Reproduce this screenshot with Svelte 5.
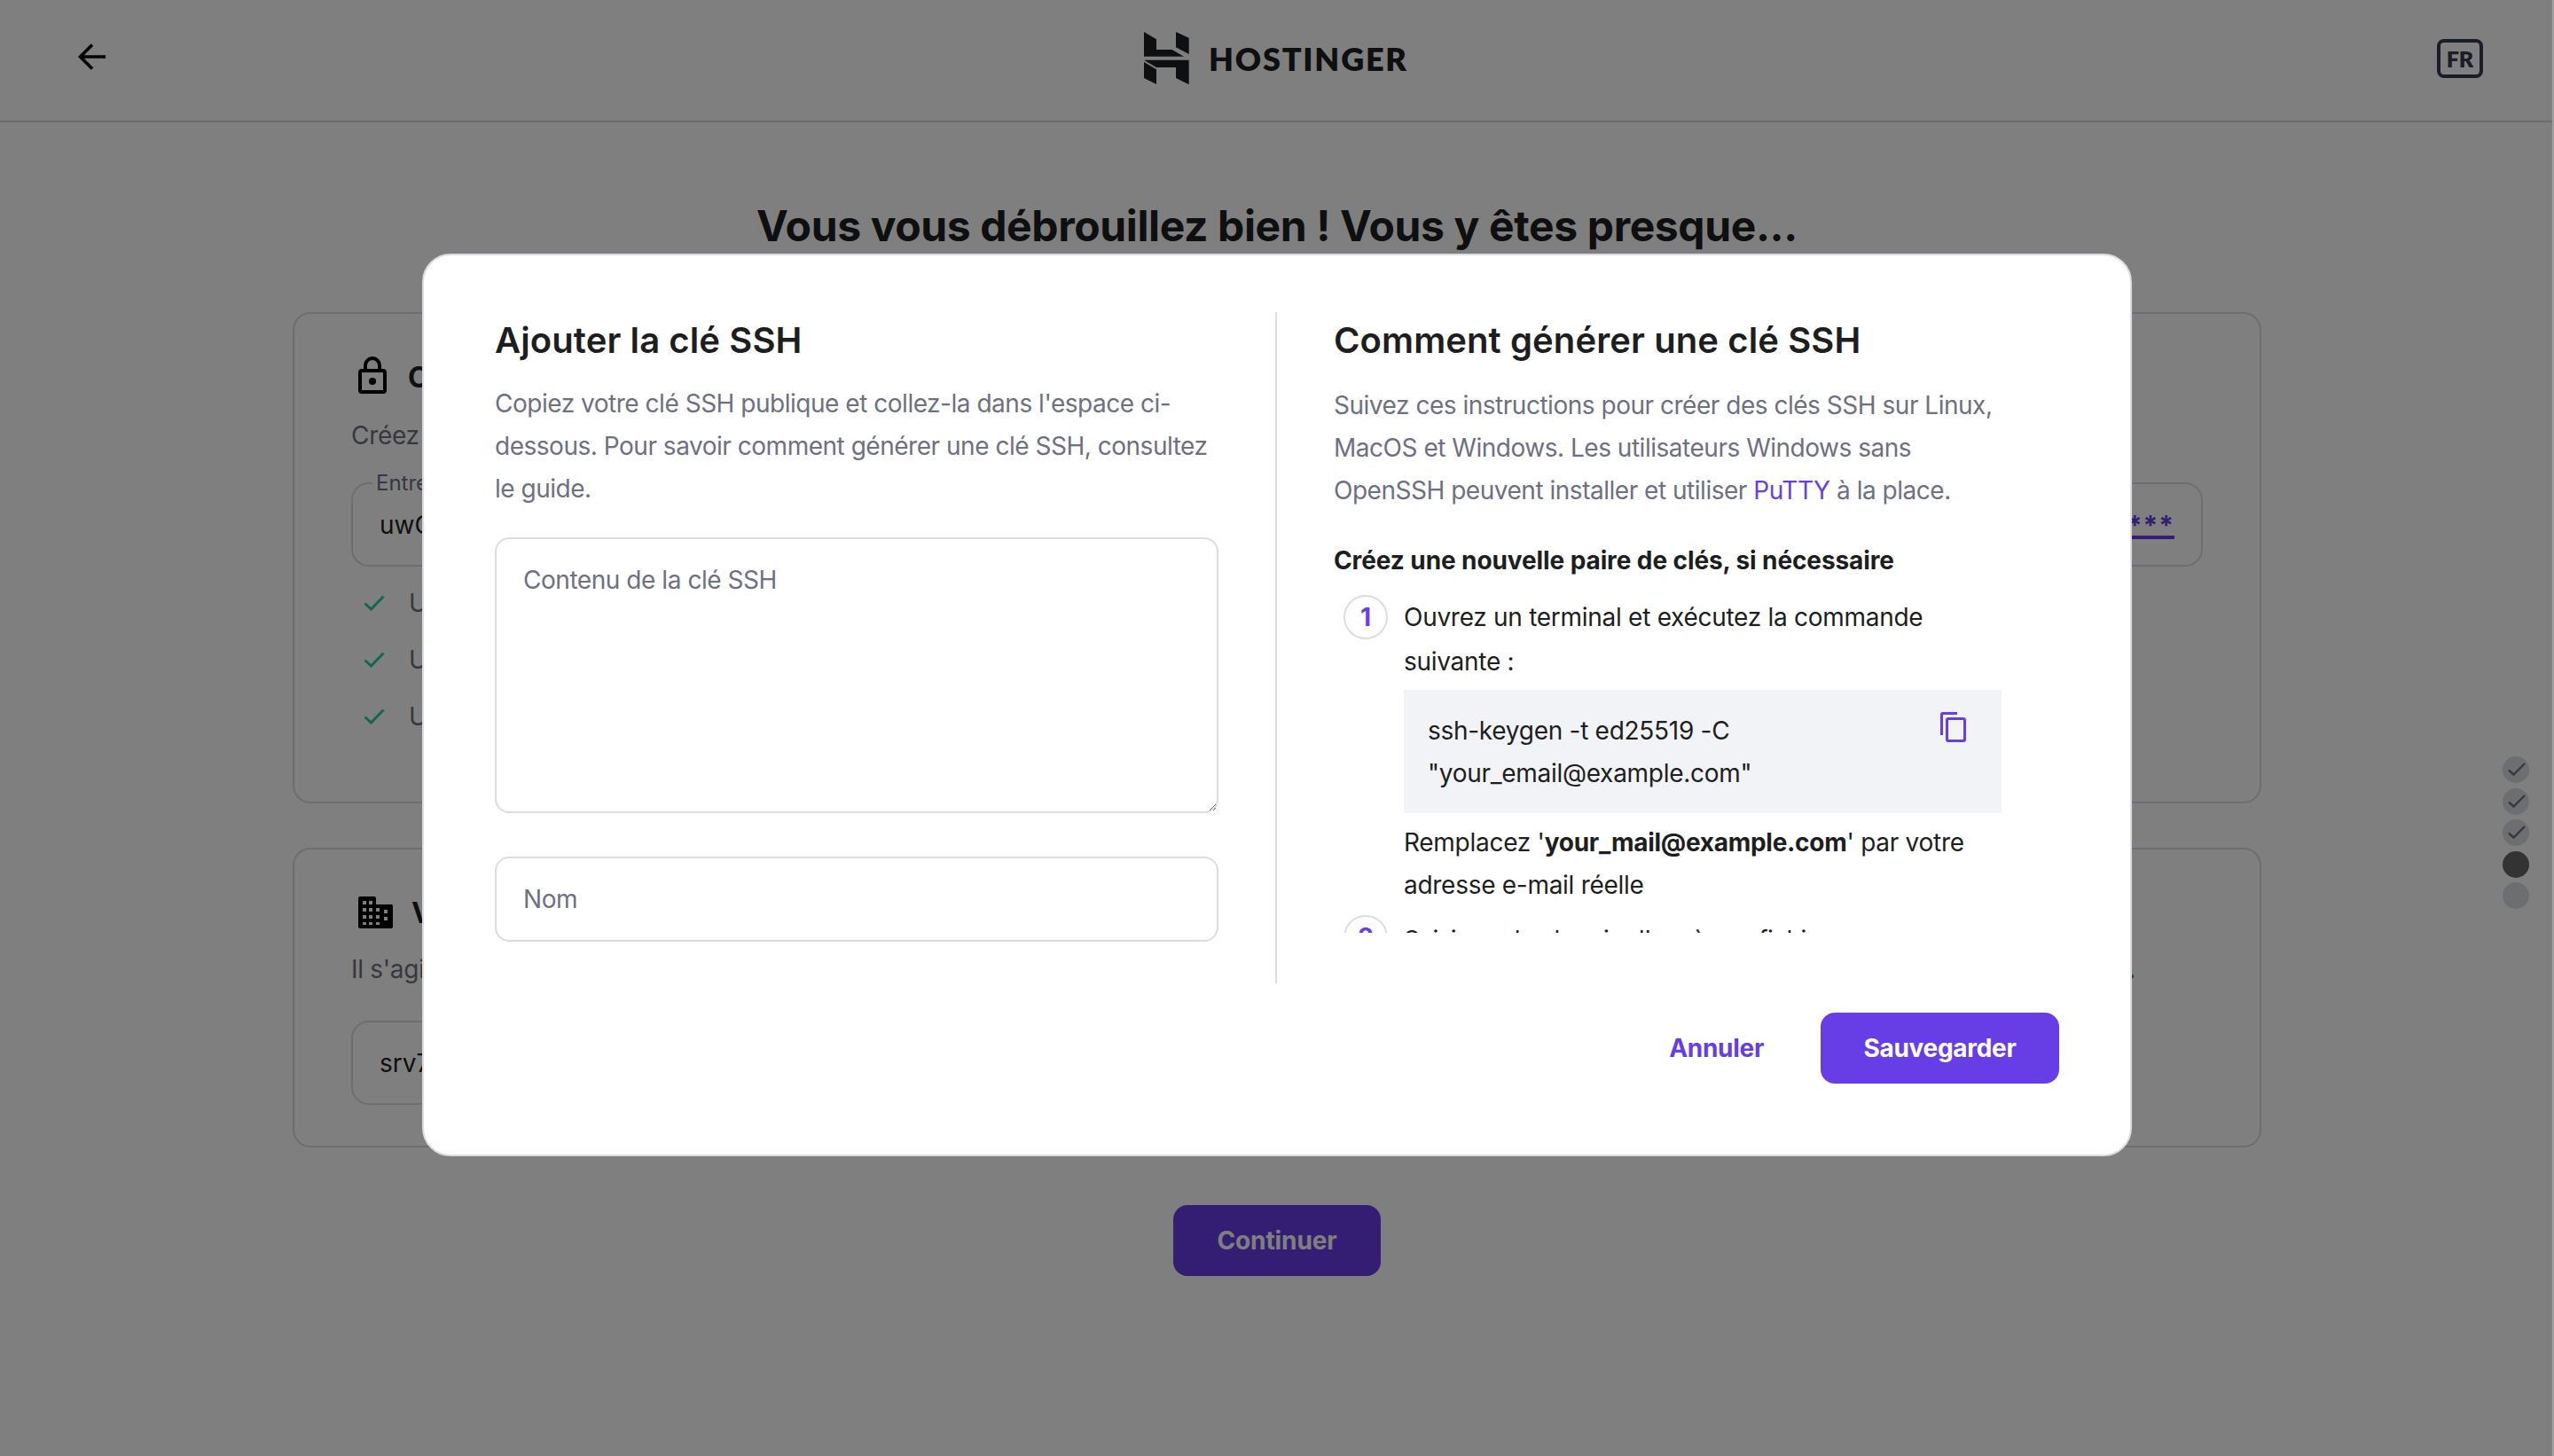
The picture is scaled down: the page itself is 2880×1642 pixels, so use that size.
<script>
  const checks = ['Une lettre majuscule et une lettre minuscule', 'Un chiffre et un caractère spécial', 'Un minimum de 12 caractères'];
  const dots = ['done', 'done', 'done', 'active', 'todo'];
</script>

<div class="page">
  <header class="top">
    <svg class="back" viewBox="0 0 32 32" fill="none" stroke="#000" stroke-width="3.6"><path d="M31 16H3M16 2.5 2.5 16 16 29.5"/></svg>
    <div class="brand">
      <svg class="logo" viewBox="0 0 240 240" fill="#1d1e20">
        <path d="M30 30 72 55V90H125L165 113H30Z"/>
        <path d="M138 30 182 50V105L138 82Z"/>
        <path d="M30 125H182V208L138 186V150H72Z"/>
        <path d="M30 132 72 157V207L30 186Z"/>
      </svg>
      <span class="word">HOSTINGER</span>
    </div>
    <span class="lang">FR</span>
  </header>

  <main class="main">
    <h1>Vous vous débrouillez bien ! Vous y êtes presque...</h1>

    <section class="card one">
      <div class="ctitle">
        <svg class="lock" viewBox="0 0 32 42" fill="none" stroke="#000" stroke-width="4"><path d="M8 18V10a8 8 0 0 1 16 0v8"/><rect x="2" y="16" width="28" height="24" rx="2"/><circle cx="16" cy="28" r="4" fill="#000" stroke="none"/></svg>
        <h2>Créer un mot de passe root</h2>
      </div>
      <p class="cdesc">Créez un mot de passe sécurisé pour votre serveur</p>
      <div class="field pw">
        <span class="legend">Entrez le mot de passe</span>
        <span class="val">uwG7kPq</span>
        <span class="stars">***</span>
      </div>
      <ul class="rules">
        {#each checks as c}
          <li>
            <svg viewBox="0 0 24 18" fill="none" stroke="#20d0a0" stroke-width="3"><path d="M1.5 9.5 8.5 16 22.5 1.5"/></svg>
            <span>{c}</span>
          </li>
        {/each}
      </ul>
    </section>

    <section class="card two">
      <div class="ctitle">
        <svg class="bld" viewBox="0 0 39 36">
          <path fill="#000" fill-rule="evenodd" d="M2 0H18a2 2 0 0 1 2 2V9H37a2 2 0 0 1 2 2V34a2 2 0 0 1-2 2H2a2 2 0 0 1-2-2V2A2 2 0 0 1 2 0ZM5 5V9H9V5ZM12 5V9H16V5ZM5 13V17H9V13ZM12 13V17H16V13ZM5 21V25H9V21ZM12 21V25H16V21ZM5 29V32H9V29ZM12 29V32H16V29ZM20 13V17H24V13ZM29 15V19H33V15ZM20 21V25H24V21ZM29 23V27H33V23ZM20 29V32H24V29Z"/>
        </svg>
        <h2>Votre nom d'hôte</h2>
      </div>
      <p class="cdesc split"><span>Il s'agit du nom de votre serveur</span><span>.</span></p>
      <div class="field host"><span class="val">srv7</span></div>
    </section>

    <button class="cont">Continuer</button>
  </main>

  <div class="dots">
    {#each dots as d}
      <span class="dot {d}">
        {#if d === 'done'}
          <svg viewBox="0 0 30 30" fill="none" stroke="#6d7081" stroke-width="2.4"><path d="M7 15.5 12.5 20.5 25 8"/></svg>
        {/if}
      </span>
    {/each}
  </div>

  <div class="overlay"></div>

  <div class="wrap">
    <div class="modal">
      <div class="cols">
        <div class="left">
          <h3>Ajouter la clé SSH</h3>
          <p class="lead l1">Copiez votre clé SSH publique et collez-la dans l'espace ci-<br />dessous. Pour savoir comment générer une clé SSH, consultez<br />le guide.</p>
          <textarea placeholder="Contenu de la clé SSH"></textarea>
          <input placeholder="Nom" />
        </div>
        <div class="rule"></div>
        <div class="right">
          <h3>Comment générer une clé SSH</h3>
          <p class="lead l2">Suivez ces instructions pour créer des clés SSH sur Linux,<br />MacOS et Windows. Les utilisateurs Windows sans<br />OpenSSH peuvent installer et utiliser <span class="link">PuTTY</span> à la place.</p>
          <h4>Créez une nouvelle paire de clés, si nécessaire</h4>

          <div class="step">
            <span class="num">1</span>
            <div class="sbody">
              <p class="st">Ouvrez un terminal et exécutez la commande<br />suivante :</p>
              <div class="code">
                <span>ssh-keygen -t ed25519 -C<br />"your_email@example.com"</span>
                <svg viewBox="0 0 29 34" fill="none" stroke="#673de6" stroke-width="3"><path d="M1.5 26V2.5a1 1 0 0 1 1-1H19"/><rect x="7.5" y="7.5" width="20" height="25" rx="1.5"/></svg>
              </div>
              <p class="repl">Remplacez '<b>your_mail@example.com</b>' par votre<br />adresse e-mail réelle</p>
            </div>
          </div>

          <div class="step second">
            <span class="num">2</span>
            <div class="sbody"><p class="st">Saisissez le chemin d'accès au fichier</p></div>
          </div>
        </div>
      </div>
      <div class="foot">
        <button class="ghost">Annuler</button>
        <button class="primary">Sauvegarder</button>
      </div>
    </div>
  </div>
  <div class="edge"></div>
</div>

<style>
  :global(body) { margin: 0; background: #fff; }
  :global(html) { overflow: hidden; }
  * { box-sizing: border-box; }

  .page {
    position: relative;
    width: 2880px;
    height: 1642px;
    overflow: hidden;
    font-family: Inter, "Liberation Sans", sans-serif;
    color: #1d1e20;
    background: #fff;
    font-size: 28px;
  }
  .edge {
    position: absolute;
    top: 0;
    right: 0;
    bottom: 0;
    width: 2px;
    background: #a0a0a0;
  }

  .top {
    height: 138px;
    border-bottom: 2px solid #dadce0;
    display: flex;
    align-items: center;
    justify-content: space-between;
    padding: 0 80px 0 88px;
    position: relative;
  }
  .back { width: 32px; height: 32px; margin-top: -8px; }
  .brand {
    position: absolute;
    left: 1280px;
    top: 26px;
    display: flex;
    align-items: center;
    gap: 3px;
  }
  .logo { width: 80px; height: 80px; }
  .word {
    font-family: Lato, sans-serif;
    font-weight: 800;
    font-size: 36px;
    letter-spacing: 1.8px;
    line-height: 1;
  }
  .lang {
    width: 52px;
    height: 44px;
    margin-top: -4px;
    border: 4px solid #3a3a50;
    border-radius: 8px;
    display: flex;
    align-items: center;
    justify-content: center;
    font-family: Lato, sans-serif;
    font-weight: 800;
    font-size: 25px;
    color: #3a3a50;
  }

  .main {
    display: flex;
    flex-direction: column;
    align-items: center;
    padding-top: 85px;
  }
  h1 {
    margin: 0 0 65px;
    font-size: 48px;
    line-height: 64px;
    font-weight: 700;
    letter-spacing: -0.38px;
  }
  .card {
    width: 2220px;
    border: 2px solid #dadce0;
    border-radius: 20px;
    padding: 48px 64px 0;
  }
  .one { height: 554px; }
  .two { height: 338px; margin-top: 50px; }
  .ctitle { display: flex; align-items: center; height: 48px; gap: 24px; padding-left: 8px; }
  .lock { width: 32px; height: 42px; margin-top: -6px; }
  .bld { width: 39px; height: 36px; margin-right: -3px; margin-top: -2px; }
  h2 { margin: 0; font-size: 32px; line-height: 48px; font-weight: 700; }
  .cdesc { margin: 19px 0 0; line-height: 40px; color: #6d7081; font-size: 28px; letter-spacing: -0.3px; }
  .one .cdesc { margin-top: 21px; }
  .split { display: flex; justify-content: space-between; padding-right: 76px; }
  .field {
    position: relative;
    border: 2px solid #dadce0;
    border-radius: 20px;
    display: flex;
    align-items: center;
    justify-content: space-between;
    padding: 0 30px 0 30px;
  }
  .pw { height: 95px; margin-top: 33px; }
  .host { height: 95px; margin-top: 38px; width: 1500px; }
  .legend {
    position: absolute;
    left: 22px;
    top: -15px;
    padding: 0 4px;
    background: #fff;
    font-size: 24px;
    line-height: 28px;
    color: #6d7081;
  }
  .val { font-size: 28px; }
  .stars {
    color: #673de6;
    font-size: 30px;
    font-weight: 700;
    letter-spacing: 1px;
    line-height: 32px;
    text-decoration: underline;
    text-underline-offset: 1px;
    text-decoration-thickness: 4px;
  }
  .rules { list-style: none; margin: 9px 0 0; padding: 0 0 0 14px; }
  .rules li { display: flex; align-items: center; height: 64px; gap: 27px; color: #6d7081; }
  .rules svg { width: 24px; height: 18px; }

  .cont {
    margin-top: 65px;
    width: 234px;
    height: 80px;
    border: 0;
    border-radius: 16px;
    background: #673de6;
    color: #fff;
    font: 700 28px Inter, sans-serif;
    letter-spacing: -0.1px;
  }

  .dots {
    position: absolute;
    left: 2822px;
    top: 853px;
    display: flex;
    flex-direction: column;
    gap: 5.5px;
  }
  .dot { width: 30px; height: 30px; border-radius: 50%; background: #dadce0; display: block; }
  .dot svg { display: block; width: 30px; height: 30px; }
  .dot.active { background: #666; }

  .overlay { position: absolute; inset: 0; background: rgba(0, 0, 0, 0.5); }

  .wrap {
    position: absolute;
    inset: 0;
    display: flex;
    justify-content: center;
    align-items: flex-start;
    padding-top: 286px;
  }
  .modal {
    width: 1928px;
    height: 1018px;
    background: #fff;
    border: 2px solid #dadce0;
    border-radius: 32px;
    padding: 64px 80px 0;
  }
  .cols { display: flex; height: 757px; }
  .left { width: 816px; flex: none; padding-top: 4px; }
  .rule { width: 2px; background: #dadce0; margin: 0 64px; flex: none; }
  .right { flex: none; width: 818px; height: 700px; overflow: hidden; padding-top: 4px; }
  h3 {
    margin: 0;
    font-size: 40px;
    line-height: 56px;
    font-weight: 600;
    letter-spacing: 0.1px;
  }
  .lead { margin: 0; color: #6d7081; line-height: 48px; white-space: nowrap; letter-spacing: -0.48px; }
  .l1 { margin-top: 19px; }
  .l2 { margin-top: 21px; }
  .link { color: #673de6; }

  textarea, input {
    display: block;
    width: 816px;
    border: 2px solid #dadce0;
    border-radius: 16px;
    font: 28px Inter, sans-serif;
    letter-spacing: -0.45px;
    color: #1d1e20;
    outline: none;
    background: #fff;
  }
  textarea::placeholder, input::placeholder { color: #6d7081; opacity: 1; }
  textarea { height: 311px; margin-top: 31px; padding: 26px 30px; line-height: 40px; }
  input { height: 96px; margin-top: 49px; padding: 0 30px; }

  h4 { margin: 31px 0 0; font-size: 28px; line-height: 48px; font-weight: 700; letter-spacing: -0.1px; }

  .step { display: flex; gap: 18px; padding-left: 11px; margin-top: 15px; }
  .step.second { margin-top: 10px; }
  .second .st { padding-top: 3px; letter-spacing: -0.6px; }
  .num {
    flex: none;
    width: 50px;
    height: 50px;
    border: 2px solid #dadce0;
    border-radius: 50%;
    display: flex;
    align-items: center;
    justify-content: center;
    color: #673de6;
    font-weight: 700;
    font-size: 28px;
  }
  .sbody { width: 674px; white-space: nowrap; letter-spacing: -0.28px; }
  .st { margin: 0; line-height: 50px; }
  .code {
    margin-top: 7px;
    height: 139px;
    background: #f2f3f6;
    padding: 22px 27px 0;
    line-height: 48px;
    display: flex;
    justify-content: space-between;
    align-items: flex-start;
  }
  .code svg { width: 29px; height: 34px; margin: 3px 13px 0 0; flex: none; }
  .repl { margin: 9px 0 0; line-height: 48px; }
  .repl b { font-weight: 700; }

  .foot { display: flex; justify-content: flex-end; margin-top: 33px; gap: 16px; }
  button { cursor: pointer; }
  .ghost, .primary {
    height: 80px;
    border-radius: 16px;
    border: 0;
    font: 700 28px Inter, sans-serif;
    letter-spacing: -0.3px;
  }
  .ghost { padding: 0 48px; background: #fff; color: #673de6; }
  .primary { width: 269px; padding: 0; background: #673de6; color: #fff; }
</style>
